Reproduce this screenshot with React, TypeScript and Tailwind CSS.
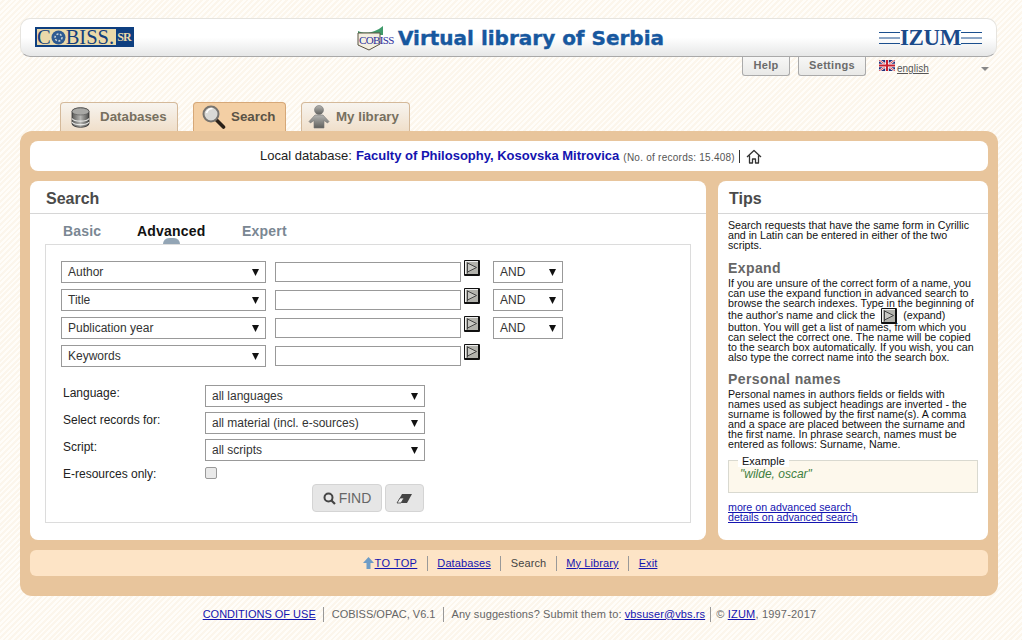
import React from "react";

const Select = ({ label, width }: { label: string; width: string }) => (
  <div className={`${width} h-[22px] flex items-center justify-between pl-[6px] pr-[6px] bg-white border border-[#999] text-[12px] text-[#333]`}>
    <span>{label}</span>
    <svg width="7" height="8" viewBox="0 0 7 8"><path d="M0 1h7L3.500 8z" fill="#111" /></svg>
  </div>
);

const ExpandButton = ({ className = "" }: { className?: string }) => (
  <div className={`w-[16px] h-[16px] inline-flex items-center justify-center bg-[#b2b2ac] border border-[#111] border-r-2 border-b-2 rounded-[1px] shadow-[inset_1px_1px_0_#eee] ${className}`}>
    <svg width="12" height="12" viewBox="0 0 12 12">
      <path d="M1.500 0.500v11M1.500 1l9 4.500-9 4.500" fill="#c9c9c4" stroke="#444" strokeWidth="1" />
    </svg>
  </div>
);

const fields = ["Author", "Title", "Publication year", "Keywords"];
const filters = [
  { label: "Language:", value: "all languages" },
  { label: "Select records for:", value: "all material (incl. e-sources)" },
  { label: "Script:", value: "all scripts" },
];

const TabIconDb = () => (
  <svg width="19" height="21" viewBox="0 0 19 21">
    <defs>
      <linearGradient id="dbg" x1="0" x2="1">
        <stop offset="0" stopColor="#5a5a58" />
        <stop offset="0.5" stopColor="#b5b5b2" />
        <stop offset="1" stopColor="#4c4c4a" />
      </linearGradient>
    </defs>
    <path d="M1 4.500c0-5 17-5 17 0v12c0 5-17 5-17 0z" fill="url(#dbg)" stroke="#333" strokeWidth="0.8" />
    <ellipse cx="9.500" cy="4.500" rx="8.500" ry="3.500" fill="#a8a8a5" stroke="#555" strokeWidth="0.6" />
    <path d="M1 11.500c2 3.500 15 3.500 17 0M1 15c2 3.500 15 3.500 17 0" fill="none" stroke="#e6e6e3" strokeWidth="1.100" />
  </svg>
);

const TabIconSearch = () => (
  <svg width="24" height="26" viewBox="0 0 24 26">
    <path d="M13.500 15l8 8" stroke="#2b2118" strokeWidth="3.600" strokeLinecap="round" />
    <circle cx="9" cy="10" r="7.500" fill="#d9d9d6" stroke="#77746f" strokeWidth="2" />
    <path d="M4.500 9c1-3 3-4.500 6-4.500" fill="none" stroke="#fff" strokeWidth="1.600" />
  </svg>
);

const TabIconUser = () => (
  <svg width="22" height="24" viewBox="0 0 22 24">
    <defs>
      <linearGradient id="usg" x1="0" x2="0" y1="0" y2="1">
        <stop offset="0" stopColor="#b5b5b2" />
        <stop offset="1" stopColor="#5f5f5c" />
      </linearGradient>
    </defs>
    <circle cx="11" cy="5" r="4.500" fill="url(#usg)" stroke="#777" strokeWidth="0.6" />
    <path d="M7 10h8l6 6.500-1.500 1.500-3.500-2.500V23H6v-7.500L2.500 18 1 16.500z" fill="url(#usg)" stroke="#777" strokeWidth="0.6" />
  </svg>
);

const Divider = ({ className = "" }: { className?: string }) => <span className={`w-px h-[15px] bg-[#999] ${className}`} />;

const Link = ({ children }: { children: React.ReactNode }) => (
  <a className="text-[#1414b0] underline">{children}</a>
);

export default function App() {
  return (
    <div
      className="w-[1022px] h-[640px] overflow-hidden text-[#222] font-['Liberation_Sans',Arial,sans-serif] bg-[repeating-linear-gradient(135deg,#fffdf9_0px,#fffdf9_2px,#fcf6ec_2px,#fcf6ec_4px)] px-[20px] pt-[18px]"
    >
      {/* Header */}
      <div className="w-[977px] h-[39px] rounded-[10px] border border-[#e6e4df] border-b-[#a9a9a9] bg-gradient-to-b from-white via-white to-[#e6e7e7] flex items-center justify-between pl-[14px] pr-[14px]">
        <div className="w-[99px] h-[20px] flex border-2 border-[#0e3f80] bg-[#ead9a9] mb-[1px]">
          <span className="flex-1 flex items-center text-[20.500px] leading-[16px] text-[#123f7d] font-['Liberation_Serif',serif]">
            C
            <svg width="15" height="15" viewBox="0 0 15 15">
              <circle cx="7.500" cy="7.500" r="7" fill="#2e5a92" />
              <circle cx="7.500" cy="7.500" r="3.500" fill="none" stroke="#c9d3d6" strokeWidth="1.500" strokeDasharray="2 1.500" />
            </svg>
            BISS.
          </span>
          <span className="w-[16px] bg-[#0e3f80] text-[#ead9a9] text-[12px] leading-[16px] font-bold text-center tracking-[-0.8px] font-['Liberation_Serif',serif]">SR</span>
        </div>
        <div className="flex items-center ml-[8px]">
          <div className="relative w-[41px] h-[26px]">
            <svg className="absolute left-0 top-0" width="28" height="26" viewBox="0 0 28 26">
              <path d="M1 6C8 9 18 8 26 1v9H1z" fill="#3f9a6a" />
              <path d="M1 8h22v11l-11 6-11-5z" fill="#f3efe0" stroke="#5a5240" strokeWidth="1" />
            </svg>
            <span className="absolute left-[2px] top-[9px] text-[11px] leading-[12px] font-['Liberation_Serif',serif] text-[#2b2f9c] tracking-[-0.6px]">COBISS</span>
          </div>
          <span className="text-[20px] leading-[26px] font-bold font-['DejaVu_Sans',sans-serif] text-[#17589f] [-webkit-text-stroke:0.4px_#17589f]">Virtual library of Serbia</span>
        </div>
        <div className="flex items-center">
          <svg width="21" height="16" viewBox="0 0 21 16"><path d="M0 2.500h21M0 8h21M0 13.500h21" stroke="#1b4f8e" strokeWidth="1" /></svg>
          <span className="text-[23px] leading-[26px] font-bold font-['Liberation_Serif',serif] text-[#1b4a8a] tracking-[-0.4px]">IZUM</span>
          <svg width="21" height="16" viewBox="0 0 21 16"><path d="M0 2.500h21M0 8h21M0 13.500h21" stroke="#1b4f8e" strokeWidth="1" /></svg>
        </div>
      </div>

      {/* Help / settings row */}
      <div className="h-[45px] flex items-start pl-[722px]">
        <div className="w-[48px] h-[19px] rounded-b-[3px] border border-t-0 border-[#aaa] bg-gradient-to-b from-[#f7f7f6] to-[#e9e9e7] text-center text-[11px] leading-[17px] font-bold tracking-[0.3px] text-[#6b6b6b]">Help</div>
        <div className="ml-[8px] w-[68px] h-[19px] rounded-b-[3px] border border-t-0 border-[#aaa] bg-gradient-to-b from-[#f7f7f6] to-[#e9e9e7] text-center text-[11px] leading-[17px] font-bold tracking-[0.3px] text-[#6b6b6b]">Settings</div>
        <svg className="ml-[13px] mt-[3px]" width="16" height="11" viewBox="0 0 16 11">
          <rect width="16" height="11" fill="#21307a" />
          <path d="M0 0l16 11M16 0L0 11" stroke="#fff" strokeWidth="2.200" />
          <path d="M0 0l16 11M16 0L0 11" stroke="#c8202f" strokeWidth="0.800" />
          <path d="M8 0v11M0 5.500h16" stroke="#fff" strokeWidth="3.600" />
          <path d="M8 0v11M0 5.500h16" stroke="#c8202f" strokeWidth="2" />
        </svg>
        <a className="ml-[2px] mt-[6px] text-[10px] leading-[12px] text-[#555] underline">english</a>
        <svg className="ml-[52px] mt-[10px]" width="8" height="4" viewBox="0 0 8 4"><path d="M0 0h8L4 4z" fill="#888" /></svg>
      </div>

      {/* Main tabs */}
      <div className="h-[29px] flex items-stretch pl-[40px] gap-[15px] text-[13.33px] font-bold">
        <div className="w-[118px] flex items-center pl-[10px] rounded-t-[4px] border border-b-0 border-[#d4b99a] bg-gradient-to-b from-[#f7f4ef] to-[#f0dfca] text-[#77705f]">
          <TabIconDb />
          <span className="ml-[10px]">Databases</span>
        </div>
        <div className="w-[93px] flex items-center pl-[8px] rounded-t-[4px] border border-b-0 border-[#d6a878] bg-[#f3cfa4] text-[#5a5346]">
          <TabIconSearch />
          <span className="ml-[5px]">Search</span>
        </div>
        <div className="w-[109px] flex items-center pl-[6px] rounded-t-[4px] border border-b-0 border-[#d4b99a] bg-gradient-to-b from-[#f7f4ef] to-[#f0dfca] text-[#77705f]">
          <TabIconUser />
          <span className="ml-[6px]">My library</span>
        </div>
      </div>

      {/* Main panel */}
      <div className="w-[978px] h-[465px] rounded-[12px] bg-[#e8c59c] p-[10px] flex flex-col gap-[10px]">
        <div className="h-[30px] rounded-[8px] bg-white flex items-center justify-center pl-[4px] text-[13px]">
          <span className="text-[#222]">Local database:</span>
          <span className="ml-[4px] font-bold text-[#1414b0]">Faculty of Philosophy, Kosovska Mitrovica</span>
          <span className="ml-[4px] text-[10px] font-normal text-[#555] tracking-[0.25px] mt-[2px]">(No. of records: 15.408)</span>
          <span className="ml-[4px] w-px h-[13px] bg-[#333]" />
          <svg className="ml-[6px]" width="16" height="15" viewBox="0 0 16 15">
            <path d="M1 8l7-6.500L15 8M3.500 6.500V14h3v-4h3v4h3V6.500" fill="none" stroke="#333" strokeWidth="1.300" strokeLinejoin="round" />
          </svg>
        </div>

        <div className="h-[359px] flex justify-between">
          {/* Search panel */}
          <div className="w-[676px] rounded-[8px] bg-white flex flex-col">
            <div className="h-[33px] pl-[16px] border-b border-[#d6d6d6] text-[16px] leading-[36px] font-bold text-[#4a4a4a]">Search</div>
            <div className="relative h-[30px] pl-[33px] pt-[4px] flex items-center text-[14px] font-bold tracking-[0.2px] text-[#7a8793]">
              <span className="w-[74px]">Basic</span>
              <span className="w-[105px] text-[#111]">Advanced</span>
              <span>Expert</span>
              <span className="absolute left-[133px] bottom-0 w-[17px] h-[6px] rounded-t-full bg-[#93a5b5]" />
            </div>
            <div className="relative ml-[15px] w-[646px] h-[279px] border border-[#dcdcdc] pl-[15px] pt-[16px]">
              <div className="flex flex-col gap-[6px]">
                {fields.map((f, i) => (
                  <div key={f} className="flex items-start h-[22px]">
                    <Select label={f} width="w-[205px]" />
                    <div className="ml-[9px] mt-[1px] w-[186px] h-[20px] border border-[#999] bg-white" />
                    <ExpandButton className="ml-[3px] -mt-[1px]" />
                    {i < 3 && <div className="ml-[13px]"><Select label="AND" width="w-[70px]" /></div>}
                  </div>
                ))}
              </div>
              <div className="mt-[18px] flex flex-col gap-[5px]">
                {filters.map((f) => (
                  <div key={f.label} className="flex items-start h-[22px]">
                    <span className="w-[144px] pl-[2px] text-[12px] leading-[16px] text-[#222]">{f.label}</span>
                    <Select label={f.value} width="w-[220px]" />
                  </div>
                ))}
              </div>
              <div className="mt-[6px] flex items-center h-[14px]">
                <span className="w-[144px] pl-[2px] text-[12px] leading-[16px] text-[#222]">E-resources only:</span>
                <span className="w-[12px] h-[12px] rounded-[2px] border border-[#999] bg-[#e9e9e9] -mt-[2px]" />
              </div>
              <div className="mt-[3px] ml-[251px] flex gap-[3px]">
                <div className="w-[70px] h-[28px] rounded-[4px] border border-[#d4d4d4] bg-[#e6e6e6] flex items-center justify-center text-[14px] text-[#666]">
                  <svg className="mr-[3px]" width="13" height="13" viewBox="0 0 13 13"><circle cx="5.500" cy="5.500" r="4" fill="none" stroke="#444" strokeWidth="2" /><path d="M8.500 8.500l3.500 3.500" stroke="#444" strokeWidth="2.200" /></svg>
                  FIND
                </div>
                <div className="w-[39px] h-[28px] rounded-[4px] border border-[#d4d4d4] bg-[#e6e6e6] flex items-center justify-center">
                  <svg width="17" height="11" viewBox="0 0 17 11"><path d="M6 1h10l-5 9H1z" fill="#444" /><path d="M1 10l3-5h4l-3 5z" fill="#eee" stroke="#444" strokeWidth="0.800" /></svg>
                </div>
              </div>
            </div>
          </div>

          {/* Tips panel */}
          <div className="w-[270px] rounded-[8px] bg-white flex flex-col">
            <div className="h-[33px] pl-[11px] border-b border-[#d6d6d6] text-[16px] leading-[36px] font-bold text-[#4a4a4a]">Tips</div>
            <div className="pl-[10px] pr-[10px] pt-[6px] text-[10.67px] leading-[10px] text-[#111]">
              <p>Search requests that have the same form in Cyrillic and in Latin can be entered in either of the two scripts.</p>
              <h3 className="mt-[11px] mb-[3px] text-[14px] leading-[14px] font-bold tracking-[0.4px] text-[#666]">Expand</h3>
              <p>
                If you are unsure of the correct form of a name, you can use the expand function in advanced search to browse the search indexes. Type in the beginning of the author's name and click the
                <ExpandButton className="mx-[6px] align-[-3px] -mb-[2px]" />
                (expand) button. You will get a list of names, from which you can select the correct one. The name will be copied to the search box automatically. If you wish, you can also type the correct name into the search box.
              </p>
              <h3 className="mt-[10px] mb-[3px] text-[14px] leading-[14px] font-bold tracking-[0.4px] text-[#666]">Personal names</h3>
              <p>Personal names in authors fields or fields with names used as subject headings are inverted - the surname is followed by the first name(s). A comma and a space are placed between the surname and the first name. In phrase search, names must be entered as follows: Surname, Name.</p>
              <div className="relative mt-[11px] h-[33px] border border-[#d9d9d0] bg-[#fdf8ec] pl-[11px] pt-[7px]">
                <span className="absolute left-[9px] -top-[5px] bg-white px-[4px] text-[11px] leading-[11px] text-[#111]">Example</span>
                <span className="text-[12px] leading-[12px] italic text-[#3f7f3f]">"wilde, oscar"</span>
              </div>
              <div className="mt-[9px]"><Link>more on advanced search</Link></div>
              <div><Link>details on advanced search</Link></div>
            </div>
          </div>
        </div>

        {/* Bottom nav */}
        <div className="h-[26px] rounded-[6px] bg-[#fde4c6] flex items-center justify-center gap-[9.500px] pl-[2px] text-[11px] tracking-[0.1px]">
          <span className="flex items-center">
            <svg width="11" height="12" viewBox="0 0 11 12"><path d="M5.500 0L11 6H7.500v6h-4V6H0z" fill="#6d9cc6" /></svg>
            <span className="ml-[1px] tracking-[0.4px]"><Link>TO TOP</Link></span>
          </span>
          <Divider />
          <Link>Databases</Link>
          <Divider />
          <span className="text-[#444]">Search</span>
          <Divider />
          <Link>My Library</Link>
          <Divider />
          <Link>Exit</Link>
        </div>
      </div>

      {/* Footer */}
      <div className="mt-[10px] h-[16px] flex items-center justify-center gap-[7.500px] pr-[3px] text-[11px] text-[#666]">
        <Link>CONDITIONS OF USE</Link>
        <Divider />
        <span>COBISS/OPAC, V6.1</span>
        <Divider />
        <span className="tracking-[0.1px]">Any suggestions? Submit them to: <Link>vbsuser@vbs.rs</Link></span>
        <Divider className="-ml-[3px]" />
        <span className="-ml-[2px] tracking-[0.2px]">© <Link>IZUM</Link>, 1997-2017</span>
      </div>
    </div>
  );
}
